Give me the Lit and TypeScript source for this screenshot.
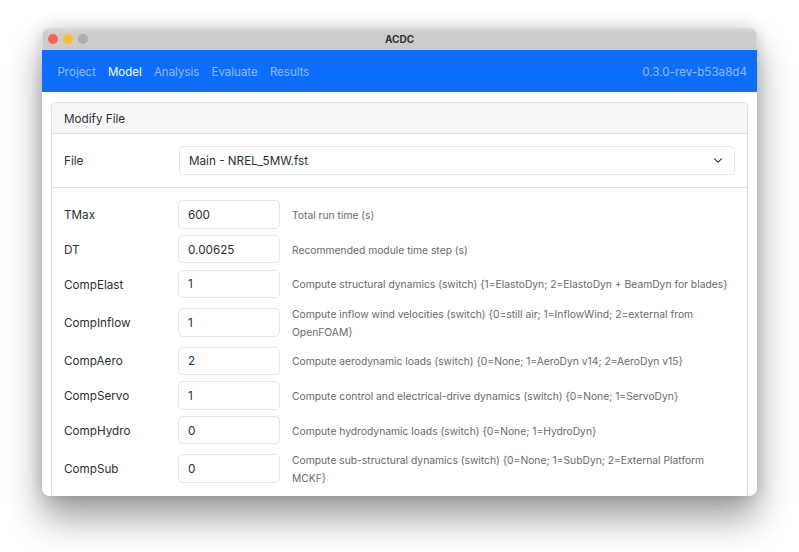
import { LitElement, html, css } from "lit";
import { customElement } from "lit/decorators.js";

const ROWS: [string, string, string, boolean][] = [
  ["TMax", "600", "Total run time (s)", false],
  ["DT", "0.00625", "Recommended module time step (s)", false],
  ["CompElast", "1", "Compute structural dynamics (switch) {1=ElastoDyn; 2=ElastoDyn + BeamDyn for blades}", false],
  ["CompInflow", "1", "Compute inflow wind velocities (switch) {0=still air; 1=InflowWind; 2=external from OpenFOAM}", true],
  ["CompAero", "2", "Compute aerodynamic loads (switch) {0=None; 1=AeroDyn v14; 2=AeroDyn v15}", false],
  ["CompServo", "1", "Compute control and electrical-drive dynamics (switch) {0=None; 1=ServoDyn}", false],
  ["CompHydro", "0", "Compute hydrodynamic loads (switch) {0=None; 1=HydroDyn}", false],
  ["CompSub", "0", "Compute sub-structural dynamics (switch) {0=None; 1=SubDyn; 2=External Platform MCKF}", true],
];

@customElement("app-root")
export class AppRoot extends LitElement {
  static styles = css`
    :host {
      display: block;
      width: 799px;
      height: 552px;
      overflow: hidden;
      background: #fff;
      padding: 28px 42px 56px;
      box-sizing: border-box;
      font-family: Inter, "Liberation Sans", sans-serif;
      color: #2b2f33;
    }
    .window {
      height: 468px;
      border-radius: 8px;
      overflow: hidden;
      background: #fff;
      box-shadow: 0 22px 36px rgba(0, 0, 0, 0.38), 0 0 16px rgba(0, 0, 0, 0.16);
      display: flex;
      flex-direction: column;
    }
    .titlebar {
      height: 22px;
      flex: none;
      background: linear-gradient(#dadada, #cdcdcd 25%, #cbcbcb);
      box-shadow: inset -1px 0 0 #dcdcdc, inset 1px 0 0 #dcdcdc;
      position: relative;
      display: flex;
      align-items: center;
      justify-content: center;
      font-size: 10px;
      font-weight: 700;
      color: #333;
    }
    .lights {
      position: absolute;
      left: 6px;
      top: 6px;
      display: flex;
      gap: 5px;
    }
    .lights i {
      width: 10px;
      height: 10px;
      border-radius: 50%;
      display: block;
    }
    .navbar {
      height: 42px;
      flex: none;
      background: #0d6efd;
      display: flex;
      align-items: center;
      justify-content: space-between;
      padding: 1px 10px 0 15.5px;
      box-sizing: border-box;
      font-size: 11.65px;
      color: rgba(255, 255, 255, 0.55);
    }
    .nav {
      display: flex;
      gap: 12.2px;
      font-size: 11.5px;
    }
    .nav .active {
      color: #fff;
    }
    .content {
      flex: 1;
      min-height: 0;
      display: flex;
      flex-direction: column;
      padding: 10px 9px 0;
    }
    .card {
      flex: 1;
      min-height: 0;
      overflow: hidden;
      border: 1px solid #dfdfdf;
      border-bottom: 0;
      border-radius: 5px 5px 0 0;
      font-size: 11.7px;
    }
    .card-header {
      height: 30px;
      background: #f7f7f7;
      border-bottom: 1px solid #dfdfdf;
      display: flex;
      align-items: center;
      padding: 0 12px;
    }
    .card-header span {
      padding-top: 1px;
    }
    .file-row {
      height: 54px;
      box-sizing: border-box;
      border-bottom: 1px solid #dfdfdf;
      display: grid;
      grid-template-columns: 115px 1fr;
      align-items: center;
      padding: 0 12px;
    }
    .select {
      height: 29px;
      box-sizing: border-box;
      border: 1px solid #e3e5e8;
      border-radius: 5px;
      display: flex;
      align-items: center;
      justify-content: space-between;
      padding: 0 12px 0 9px;
    }
    .rows {
      padding: 9.1px 12px 0;
      display: flex;
      flex-direction: column;
    }
    .row {
      display: grid;
      grid-template-columns: 114px 102px 1fr;
      align-items: center;
      min-height: 34.7px;
    }
    .row.tall {
      min-height: 42.3px;
    }
    .label {
      padding-top: 1.4px;
    }
    .input {
      height: 28.5px;
      box-sizing: border-box;
      border: 1px solid #e3e5e8;
      border-radius: 5px;
      display: flex;
      align-items: center;
      padding: 1px 9px 0;
    }
    .help {
      padding: 1px 0 0 12px;
      font-size: 10.3px;
      line-height: 18px;
      color: #6a6a6a;
    }
  `;

  render() {
    return html`
      <div class="window">
        <div class="titlebar">
          <div class="lights">
            <i style="background:#fe5f57"></i>
            <i style="background:#febc2e"></i>
            <i style="background:#adadad"></i>
          </div>
          ACDC
        </div>
        <div class="navbar">
          <div class="nav">
            <span>Project</span>
            <span class="active">Model</span>
            <span>Analysis</span>
            <span>Evaluate</span>
            <span>Results</span>
          </div>
          <span>0.3.0-rev-b53a8d4</span>
        </div>
        <div class="content">
          <div class="card">
            <div class="card-header"><span>Modify File</span></div>
            <div class="file-row">
              <span>File</span>
              <div class="select">
                <span>Main - NREL_5MW.fst</span>
                <svg width="8" height="5" viewBox="0 0 8 5" fill="none" stroke="#343a40" stroke-width="1.2" stroke-linecap="round" stroke-linejoin="round">
                  <path d="M.6.8 4 4.2 7.4.8" />
                </svg>
              </div>
            </div>
            <div class="rows">
              ${ROWS.map(
                ([name, value, help, tall]) => html`
                  <div class="row ${tall ? "tall" : ""}">
                    <span class="label">${name}</span>
                    <div class="input">${value}</div>
                    <span class="help">${help}</span>
                  </div>
                `
              )}
            </div>
          </div>
        </div>
      </div>
    `;
  }
}
